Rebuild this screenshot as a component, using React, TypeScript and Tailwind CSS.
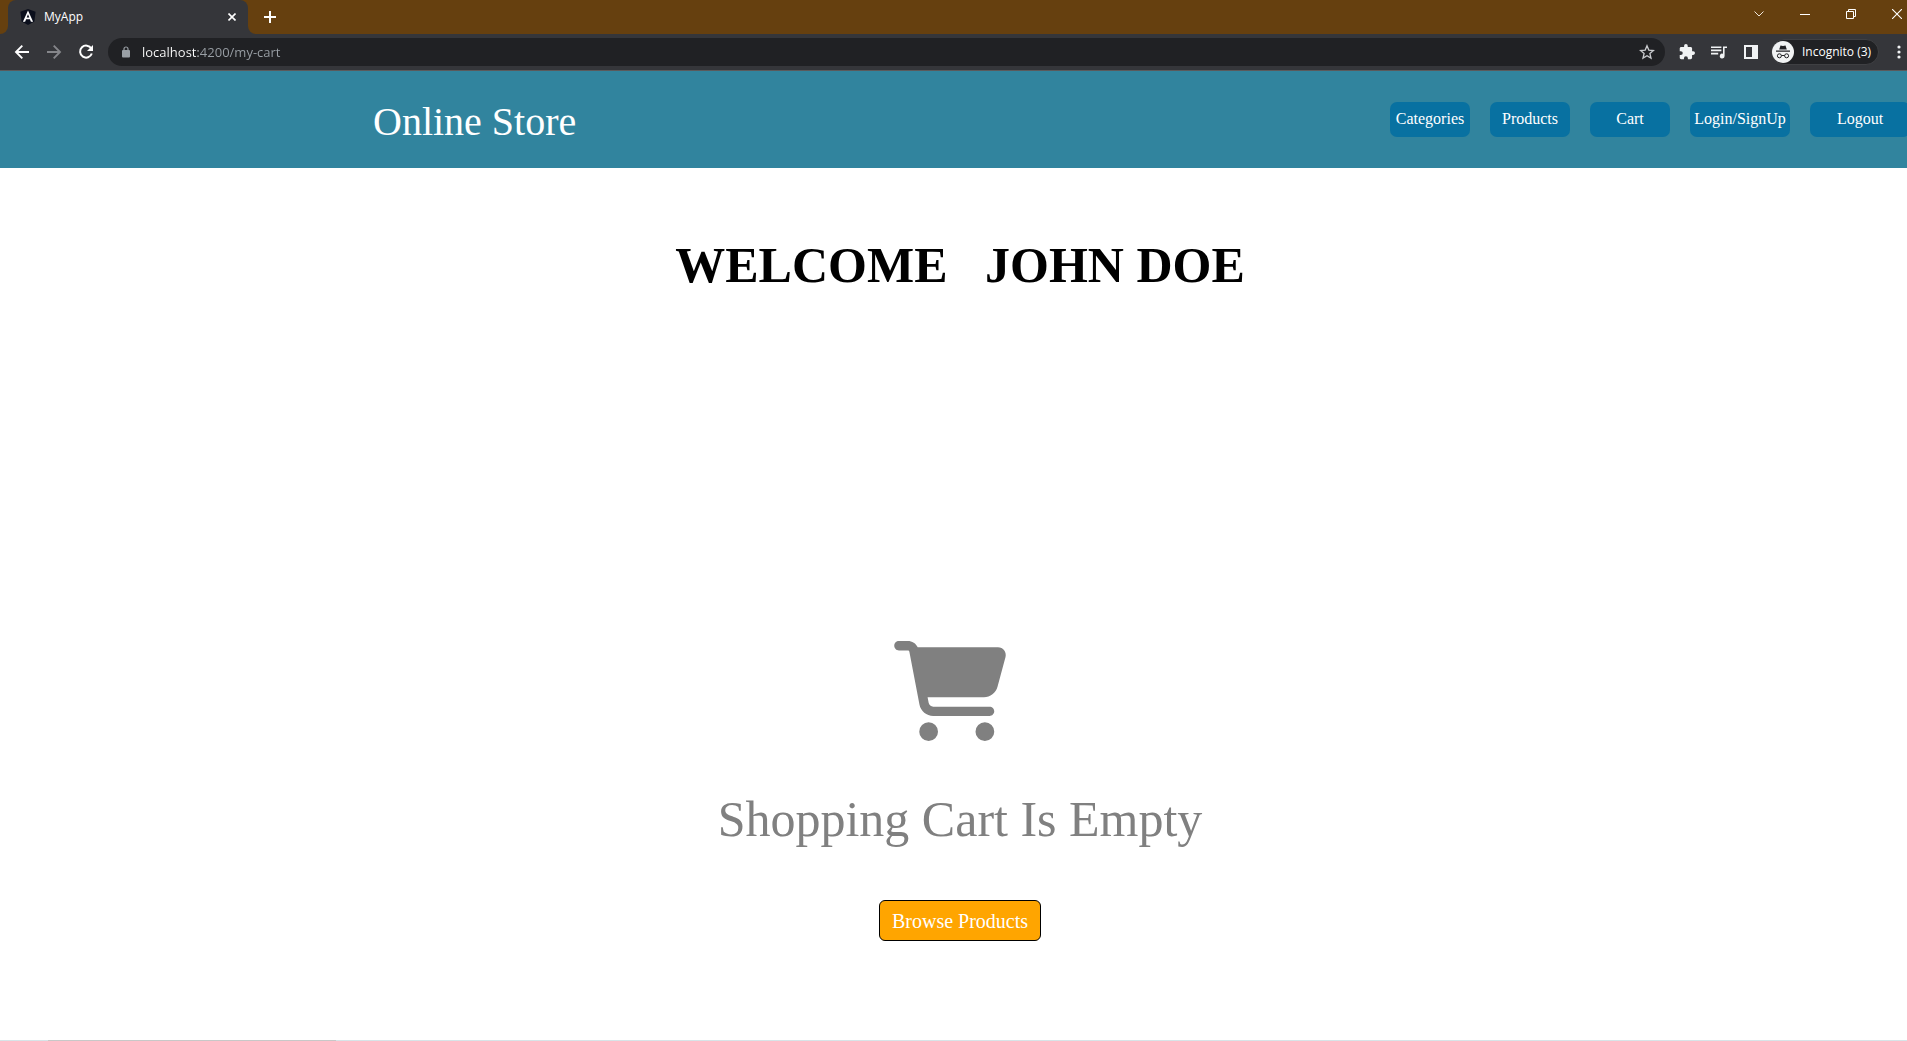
import React from "react";
import { FaCartShopping } from "react-icons/fa6";

const navItems = [
  { label: "Categories", width: "w-20" },
  { label: "Products", width: "w-20" },
  { label: "Cart", width: "w-20" },
  { label: "Login/SignUp", width: "w-[100px]" },
  { label: "Logout", width: "w-[100px]" },
];

function TabStrip() {
  return (
    <div className="flex h-[34px] bg-[#66400f] pl-2 text-white">
      <div className="relative flex w-60 items-center rounded-t-lg bg-[#35363a] pb-1 pl-3 pr-2">
        <span className="absolute -left-2 bottom-0 size-2 bg-[#35363a]">
          <span className="block size-2 rounded-br-lg bg-[#66400f]" />
        </span>
        <span className="absolute -right-2 bottom-0 size-2 bg-[#35363a]">
          <span className="block size-2 rounded-bl-lg bg-[#66400f]" />
        </span>
        <svg className="mt-1 size-4" viewBox="0 0 16 16" aria-hidden="true">
          <path d="M8 0 15.6 2.7 14.4 12.4 8 16 1.6 12.4.4 2.7Z" fill="#0b0f1c" />
          <path d="M8 1.500 2.900 12.800h2.200l1-2.500h3.800l1 2.500h2.200Zm1.300 7.100H6.700L8 5.300Z" fill="#fff" />
        </svg>
        <span className="ml-2 mt-1 flex-1 text-[12px] leading-4">MyApp</span>
        <button aria-label="Close tab" className="mt-1 grid size-4 place-items-center">
          <svg className="size-2" viewBox="0 0 8 8" stroke="#fff" strokeWidth="1.6" aria-hidden="true">
            <path d="M.5.5l7 7M7.5.5l-7 7" />
          </svg>
        </button>
      </div>
      <button aria-label="New tab" className="ml-3 grid w-5 place-items-center">
        <svg className="size-3" viewBox="0 0 12 12" stroke="#fff" strokeWidth="2" aria-hidden="true">
          <path d="M6 0v12M0 6h12" />
        </svg>
      </button>
      <div className="-mr-[13px] ml-auto flex h-7 items-center">
        <button aria-label="Search tabs" className="grid w-[46px] place-items-center">
          <svg className="h-1.5 w-2.5" viewBox="0 0 10 6" fill="none" stroke="#eee5da" aria-hidden="true">
            <path d="M.5.5 5 5 9.500.5" />
          </svg>
        </button>
        <button aria-label="Minimize" className="grid w-[46px] place-items-center">
          <svg className="h-px w-2.5" viewBox="0 0 10 1" aria-hidden="true">
            <rect width="10" height="1" fill="#fff" />
          </svg>
        </button>
        <button aria-label="Restore" className="grid w-[46px] place-items-center">
          <svg className="size-2.5" viewBox="0 0 10 10" fill="none" stroke="#fff" aria-hidden="true">
            <path d="M.5 2.500h7v7h-7zM2.500 2.500v-2h7v7h-2" />
          </svg>
        </button>
        <button aria-label="Close window" className="grid w-[46px] place-items-center">
          <svg className="size-2.5" viewBox="0 0 10 10" stroke="#fff" strokeWidth="1.1" aria-hidden="true">
            <path d="M0 0l10 10M10 0 0 10" />
          </svg>
        </button>
      </div>
    </div>
  );
}

function Toolbar() {
  return (
    <div className="flex h-[37px] items-center border-b border-[#5a5a5c] bg-[#35363a] text-white">
      <div className="flex w-[108px] items-center gap-4 pl-[14px]">
        <button aria-label="Back">
          <svg className="size-4" viewBox="0 0 16 16" fill="none" stroke="#fff" strokeWidth="1.9" aria-hidden="true">
            <path d="M15 8H2.500M8.300 1.700 2 8l6.300 6.300" />
          </svg>
        </button>
        <button aria-label="Forward">
          <svg className="size-4" viewBox="0 0 16 16" fill="none" stroke="#85868a" strokeWidth="1.9" aria-hidden="true">
            <path d="M1 8h12.500M7.700 1.700 14 8l-6.300 6.300" />
          </svg>
        </button>
        <button aria-label="Reload">
          <svg className="size-4" viewBox="0 0 16 16" aria-hidden="true">
            <path d="M13.300 4.600A6 6 0 1 0 13.800 9.500" fill="none" stroke="#fff" strokeWidth="2" />
            <path d="M15 1v6H9Z" fill="#fff" />
          </svg>
        </button>
      </div>
      <div className="flex h-7 flex-1 items-center rounded-full bg-[#202124] pl-3.5 pr-2.5">
        <svg className="h-3 w-2" viewBox="0 0 8 12" aria-hidden="true">
          <rect y="4" width="8" height="7.500" rx="1" fill="#9aa0a6" />
          <path d="M2 4.500V3a2 2 0 0 1 4 0v1.500" fill="none" stroke="#9aa0a6" strokeWidth="1.200" />
        </svg>
        <input
          aria-label="Address"
          defaultValue="localhost:4200/my-cart"
          className="ml-3 h-5 min-w-0 flex-1 bg-[linear-gradient(to_right,#fff_56px,#9aa0a6_56px)] bg-clip-text text-[13px] leading-5 text-transparent outline-none"
        />
        <button aria-label="Bookmark this page">
          <svg className="size-4" viewBox="0 0 16 16" fill="none" stroke="#c9cbce" strokeWidth="1.300" aria-hidden="true">
            <path d="m8 1.800 1.800 4.300 4.600.4-3.500 3 1.100 4.600L8 11.700l-4 2.400 1.100-4.600-3.500-3 4.600-.4Z" />
          </svg>
        </button>
      </div>
      <div className="ml-3.5 flex items-center gap-4 text-[#f1f3f4]">
        <button aria-label="Extensions">
          <svg className="size-4" viewBox="1 1 22 22" fill="currentColor" aria-hidden="true">
            <path d="M20.500 11H19V7c0-1.100-.9-2-2-2h-4V3.500a2.500 2.500 0 0 0-5 0V5H4c-1.100 0-2 .9-2 2v3.800h1.500a2.700 2.700 0 0 1 0 5.400H2V20c0 1.100.9 2 2 2h3.800v-1.500a2.700 2.700 0 0 1 5.400 0V22H17c1.100 0 2-.9 2-2v-4h1.500a2.500 2.500 0 0 0 0-5Z" />
          </svg>
        </button>
        <button aria-label="Media controls">
          <svg className="size-4" viewBox="2 3 20 18" fill="currentColor" aria-hidden="true">
            <path d="M2 5h13v2H2zM2 9h13v2H2zM2 13h9v2H2zM17 5h5v2h-3v10a3 3 0 1 1-2-2.800Z" />
          </svg>
        </button>
        <button aria-label="Side panel">
          <svg className="size-4" viewBox="0 0 16 16" aria-hidden="true">
            <path fill="currentColor" d="M1 1h14v14H1zM3 3v10h6V3z" fillRule="evenodd" />
          </svg>
        </button>
      </div>
      <button className="ml-3 flex h-[26px] w-[108px] items-center rounded-full border border-[#3f4043] bg-[#202124]">
        <svg className="size-[22px]" viewBox="0 0 22 22" aria-hidden="true">
          <circle cx="11" cy="11" r="11" fill="#f1f3f4" />
          <path d="M8.500 4.500 11 5l2.500-.5L14.800 8.500H7.200ZM4 9.600h14v1.200H4z" fill="#202124" />
          <g fill="none" stroke="#202124">
            <circle cx="7.400" cy="14.800" r="2" />
            <circle cx="14.600" cy="14.800" r="2" />
            <path d="M9.400 14.500h3.200" />
          </g>
        </svg>
        <span className="ml-2 whitespace-nowrap text-[12px] leading-4">Incognito (3)</span>
      </button>
      <button aria-label="Menu" className="ml-3 grid w-4 place-items-center">
        <svg className="h-3.5 w-1" viewBox="0 0 4 14" fill="#f1f3f4" aria-hidden="true">
          <circle cx="2" cy="2" r="1.600" />
          <circle cx="2" cy="7" r="1.600" />
          <circle cx="2" cy="12" r="1.600" />
        </svg>
      </button>
    </div>
  );
}

function StoreHeader() {
  return (
    <header className="flex h-[97px] items-start justify-between bg-[#31849e] pl-[373px] text-white">
      <h1 className="mt-[30px] text-[40px] leading-[42px]">Online Store</h1>
      <nav className="-mr-[3px] mt-[31px] flex gap-5">
        {navItems.map((item) => (
          <button
            key={item.label}
            className={`${item.width} h-[35px] whitespace-nowrap rounded-[7px] bg-[#0871a1] pb-0.5 text-center text-base leading-4`}
          >
            {item.label}
          </button>
        ))}
      </nav>
    </header>
  );
}

export default function App() {
  return (
    <div className="flex min-h-screen flex-col overflow-x-hidden bg-white">
      <div className="font-['Open_Sans',sans-serif]">
        <TabStrip />
        <Toolbar />
      </div>
      <div className="flex flex-1 flex-col font-['Liberation_Serif',serif]">
        <StoreHeader />
        <main className="flex flex-col items-center pl-[13px] pt-[68px]">
          <h2 className="whitespace-pre text-[50px] font-bold leading-[58px]">{"WELCOME   JOHN DOE"}</h2>
          <FaCartShopping className="mr-[19px] mt-[347px] h-[100px] w-[113px] text-[#808080]" aria-hidden="true" />
          <p className="mt-[49px] text-[50px] leading-[58px] text-[#808080]">Shopping Cart Is Empty</p>
          <button className="mt-[52px] h-[41px] w-[162px] rounded-md border border-black bg-[#ffa500] text-xl leading-5 text-white">
            Browse Products
          </button>
        </main>
        <footer className="mt-auto flex h-px bg-[#d7e4e8]">
          <div className="ml-12 w-72 bg-[#c8c8c8]" />
        </footer>
      </div>
    </div>
  );
}
